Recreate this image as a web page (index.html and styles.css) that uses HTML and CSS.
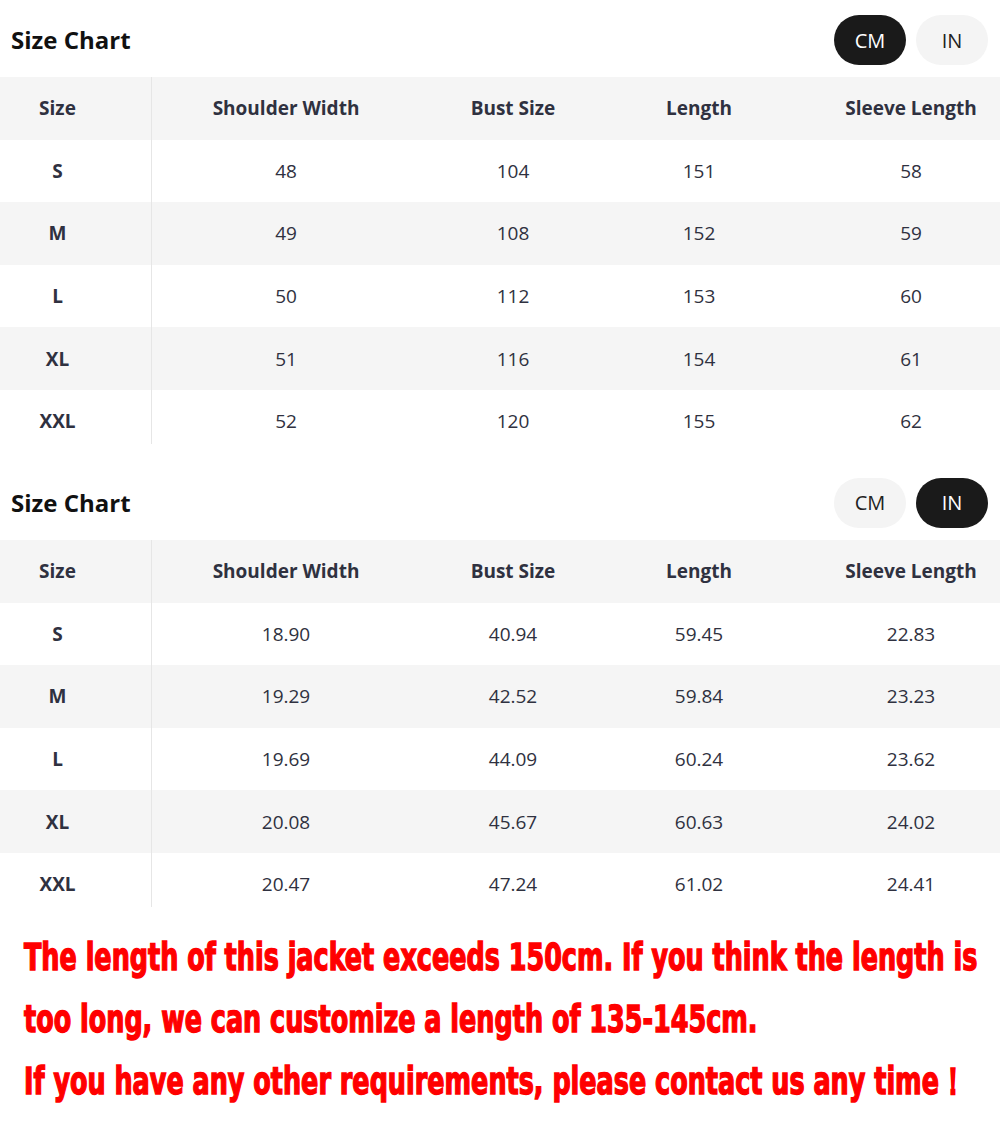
FILE: index.html
```html
<!DOCTYPE html>
<html>
<head>
<meta charset="utf-8">
<link rel="stylesheet" href="styles.css">
</head>
<body>
<section class="chart">
  <div class="chart-head">
    <h2 class="title">Size Chart</h2>
    <div class="units">
      <span class="pill active">CM</span>
      <span class="pill">IN</span>
    </div>
  </div>
  <div class="table">
    <div class="row head"><div class="c c1">Size</div><div class="c c2">Shoulder Width</div><div class="c c3">Bust Size</div><div class="c c4">Length</div><div class="c c5">Sleeve Length</div></div>
    <div class="row"><div class="c c1">S</div><div class="c c2">48</div><div class="c c3">104</div><div class="c c4">151</div><div class="c c5">58</div></div>
    <div class="row alt"><div class="c c1">M</div><div class="c c2">49</div><div class="c c3">108</div><div class="c c4">152</div><div class="c c5">59</div></div>
    <div class="row"><div class="c c1">L</div><div class="c c2">50</div><div class="c c3">112</div><div class="c c4">153</div><div class="c c5">60</div></div>
    <div class="row alt"><div class="c c1">XL</div><div class="c c2">51</div><div class="c c3">116</div><div class="c c4">154</div><div class="c c5">61</div></div>
    <div class="row last"><div class="c c1">XXL</div><div class="c c2">52</div><div class="c c3">120</div><div class="c c4">155</div><div class="c c5">62</div></div>
  </div>
</section>

<section class="chart second">
  <div class="chart-head">
    <h2 class="title">Size Chart</h2>
    <div class="units">
      <span class="pill">CM</span>
      <span class="pill active">IN</span>
    </div>
  </div>
  <div class="table">
    <div class="row head"><div class="c c1">Size</div><div class="c c2">Shoulder Width</div><div class="c c3">Bust Size</div><div class="c c4">Length</div><div class="c c5">Sleeve Length</div></div>
    <div class="row"><div class="c c1">S</div><div class="c c2">18.90</div><div class="c c3">40.94</div><div class="c c4">59.45</div><div class="c c5">22.83</div></div>
    <div class="row alt"><div class="c c1">M</div><div class="c c2">19.29</div><div class="c c3">42.52</div><div class="c c4">59.84</div><div class="c c5">23.23</div></div>
    <div class="row"><div class="c c1">L</div><div class="c c2">19.69</div><div class="c c3">44.09</div><div class="c c4">60.24</div><div class="c c5">23.62</div></div>
    <div class="row alt"><div class="c c1">XL</div><div class="c c2">20.08</div><div class="c c3">45.67</div><div class="c c4">60.63</div><div class="c c5">24.02</div></div>
    <div class="row last"><div class="c c1">XXL</div><div class="c c2">20.47</div><div class="c c3">47.24</div><div class="c c4">61.02</div><div class="c c5">24.41</div></div>
  </div>
</section>

<div class="notice">
  <p>The length of this jacket exceeds 150cm. If you think the length is</p>
  <p>too long, we can customize a length of 135-145cm.</p>
  <p>If you have any other requirements, please contact us any time！</p>
</div>
</body>
</html>
```
FILE: styles.css
```css
* { box-sizing: border-box; }
html, body { margin: 0; padding: 0; background: #fff; }
body {
  width: 1000px;
  height: 1143px;
  overflow: hidden;
  font-family: "Open Sans", "Noto Sans", sans-serif;
  color: #2f3140;
}
.chart-head {
  height: 77px;
  display: flex;
  align-items: flex-start;
  justify-content: space-between;
  padding: 15px 12px 0 11px;
}
.title {
  margin: 8px 0 0 0;
  font-size: 24px;
  font-weight: 700;
  color: #111;
}
.units { display: flex; gap: 10px; }
.pill {
  width: 72px;
  height: 50px;
  border-radius: 25px;
  background: #f4f4f4;
  color: #222;
  font-size: 20px;
  display: flex;
  align-items: center;
  justify-content: center;
}
.pill.active { background: #1a1a1a; color: #fff; }
.table { display: flex; flex-direction: column; }
.row { display: flex; height: 62.6px; align-items: stretch; }
.row.head, .row.alt { background: #f5f5f5; }
.row.last { height: 54px; }
.row.last .c { align-items: flex-start; padding-top: 18px; }
.c {
  display: flex;
  align-items: center;
  justify-content: center;
  font-size: 19px;
}
.head .c { font-weight: 700; }
.c1 { width: 152px; padding-right: 36px; font-weight: 700; border-right: 1px solid #e6e6e6; }
.c2 { width: 268px; }
.c3 { width: 186px; }
.c4 { width: 186px; }
.c5 { width: 208px; padding-left: 30px; }
.second { margin-top: 19px; }
.notice {
  padding: 20px 0 0 24px;
  font-family: "DejaVu Sans Condensed", "DejaVu Sans", sans-serif;
  font-weight: 700;
  color: #ff0000;
  font-size: 37px;
  -webkit-text-stroke: 1.4px #ff0000;
}
.notice p {
  margin: 0;
  height: 62px;
  line-height: 62px;
  white-space: nowrap;
  transform: scaleX(0.765);
  transform-origin: left center;
}
```
